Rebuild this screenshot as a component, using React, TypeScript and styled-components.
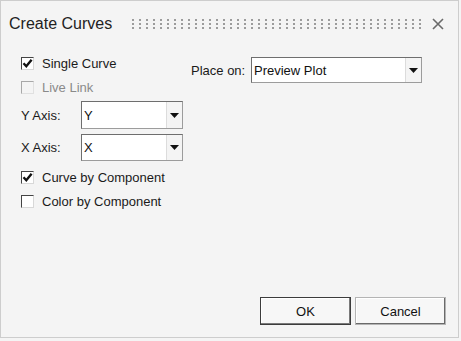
import styled, { createGlobalStyle } from 'styled-components'

const GlobalStyle = createGlobalStyle`
  html, body {
    margin: 0;
    padding: 0;
    background: #f4f4f4;
  }
  body {
    font-family: Arial, 'Liberation Sans', sans-serif;
  }
`

const Dialog = styled.div`
  box-sizing: border-box;
  width: 459px;
  height: 338px;
  background: #f4f4f4;
  border: 1px solid #cdcdcd;
  display: flex;
  flex-direction: column;
  color: #1a1a1a;
`

const TitleBar = styled.div`
  display: flex;
  align-items: center;
  height: 46px;
  padding: 0 13px 0 8px;
`

const Title = styled.div`
  font-size: 16px;
  color: #222;
  margin-right: 20px;
  white-space: nowrap;
`

const Grip = styled.div`
  flex: 1;
  height: 12px;
  margin-right: 5px;
  margin-top: 2px;
  background-image: radial-gradient(circle at 1px 1px, #9c9c9c 1px, transparent 1.2px);
  background-size: 7px 4px;
  background-position: 0 0;
`

const Close = styled.div`
  width: 14px;
  height: 14px;
  display: flex;
  align-items: center;
  justify-content: center;
`

const Body = styled.div`
  flex: 1;
  display: flex;
  padding: 4px 20px 0 20px;
`

const LeftCol = styled.div`
  display: flex;
  flex-direction: column;
  width: 170px;
`

const RightCol = styled.div`
  padding-top: 3px;
`

const CheckRow = styled.label<{ disabled?: boolean }>`
  display: flex;
  align-items: center;
  height: 24px;
  font-size: 13px;
  color: ${({ disabled }) => (disabled ? '#8a8a8a' : '#1a1a1a')};
`

const Box = styled.span<{ disabled?: boolean }>`
  box-sizing: border-box;
  width: 13px;
  height: 13px;
  margin-right: 8px;
  background: ${({ disabled }) => (disabled ? '#f4f4f4' : '#fff')};
  border-top: 1px solid ${({ disabled }) => (disabled ? '#a8a8a8' : '#444')};
  border-left: 1px solid ${({ disabled }) => (disabled ? '#a8a8a8' : '#444')};
  border-right: 1px solid ${({ disabled }) => (disabled ? '#e0e0e0' : '#d8d8d8')};
  border-bottom: 1px solid ${({ disabled }) => (disabled ? '#e0e0e0' : '#d8d8d8')};
  display: flex;
  align-items: center;
  justify-content: center;
`

const FieldRow = styled.div`
  display: flex;
  align-items: center;
  height: 32px;
  font-size: 13px;
`

const Fields = styled.div`
  margin-bottom: 2px;
`

const FieldLabel = styled.span<{ w: number }>`
  width: ${({ w }) => w}px;
  flex-shrink: 0;
`

const Combo = styled.div<{ w: number; h: number }>`
  box-sizing: border-box;
  width: ${({ w }) => w}px;
  height: ${({ h }) => h}px;
  display: flex;
  background: #fff;
  border-top: 1px solid #6e6e6e;
  border-left: 1px solid #6e6e6e;
  border-right: 1px solid #9c9c9c;
  border-bottom: 1px solid #9c9c9c;
`

const ComboText = styled.div`
  flex: 1;
  display: flex;
  align-items: center;
  padding-left: 2px;
  font-size: 13px;
  color: #111;
`

const ComboButton = styled.div`
  width: 15px;
  background: #f4f4f4;
  border-left: 1px solid #dcdcdc;
  display: flex;
  align-items: center;
  justify-content: center;
`

const Footer = styled.div`
  display: flex;
  justify-content: flex-end;
  gap: 4px;
  padding: 0 12px 12px 0;
`

const Button = styled.button<{ primary?: boolean }>`
  box-sizing: border-box;
  width: 91px;
  height: 28px;
  font-family: Arial, 'Liberation Sans', sans-serif;
  font-size: 13px;
  color: #111;
  background: #f7f7f7;
  border: 1px solid ${({ primary }) => (primary ? '#3c3c3c' : '#b4b4b4')};
  box-shadow: ${({ primary }) =>
    primary ? 'inset -1px -1px 0 #7a7a7a, inset 1px 1px 0 #fff' : 'inset -1px -1px 0 #6a6a6a, inset 1px 1px 0 #fff'};
  padding: 0;
`

const Arrow = () => (
  <svg width="9" height="5" viewBox="0 0 9 5">
    <path d="M0 0 H9 L4.5 5 Z" fill="#111" />
  </svg>
)

const Check = () => (
  <svg width="11" height="11" viewBox="0 0 11 11">
    <path d="M1.5 5.2 L4.3 8.2 L9.6 1.8" fill="none" stroke="#111" strokeWidth="2.4" />
  </svg>
)

function Checkbox({ label, checked, disabled }: { label: string; checked?: boolean; disabled?: boolean }) {
  return (
    <CheckRow disabled={disabled}>
      <Box disabled={disabled}>{checked && <Check />}</Box>
      {label}
    </CheckRow>
  )
}

function ComboBox({ value, w, h }: { value: string; w: number; h: number }) {
  return (
    <Combo w={w} h={h}>
      <ComboText>{value}</ComboText>
      <ComboButton>
        <Arrow />
      </ComboButton>
    </Combo>
  )
}

export default function App() {
  return (
    <>
      <GlobalStyle />
      <Dialog>
        <TitleBar>
          <Title>Create Curves</Title>
          <Grip />
          <Close>
            <svg width="12" height="12" viewBox="0 0 12 12">
              <path d="M1 1 L11 11 M11 1 L1 11" stroke="#6a6a6a" strokeWidth="1.6" />
            </svg>
          </Close>
        </TitleBar>
        <Body>
          <LeftCol>
            <Checkbox label="Single Curve" checked />
            <Checkbox label="Live Link" disabled />
            <Fields>
              <FieldRow>
                <FieldLabel w={60}>Y Axis:</FieldLabel>
                <ComboBox value="Y" w={102} h={28} />
              </FieldRow>
              <FieldRow>
                <FieldLabel w={60}>X Axis:</FieldLabel>
                <ComboBox value="X" w={102} h={27} />
              </FieldRow>
            </Fields>
            <Checkbox label="Curve by Component" checked />
            <Checkbox label="Color by Component" />
          </LeftCol>
          <RightCol>
            <FieldRow>
              <FieldLabel w={60}>Place on:</FieldLabel>
              <ComboBox value="Preview Plot" w={171} h={26} />
            </FieldRow>
          </RightCol>
        </Body>
        <Footer>
          <Button primary>OK</Button>
          <Button>Cancel</Button>
        </Footer>
      </Dialog>
    </>
  )
}
